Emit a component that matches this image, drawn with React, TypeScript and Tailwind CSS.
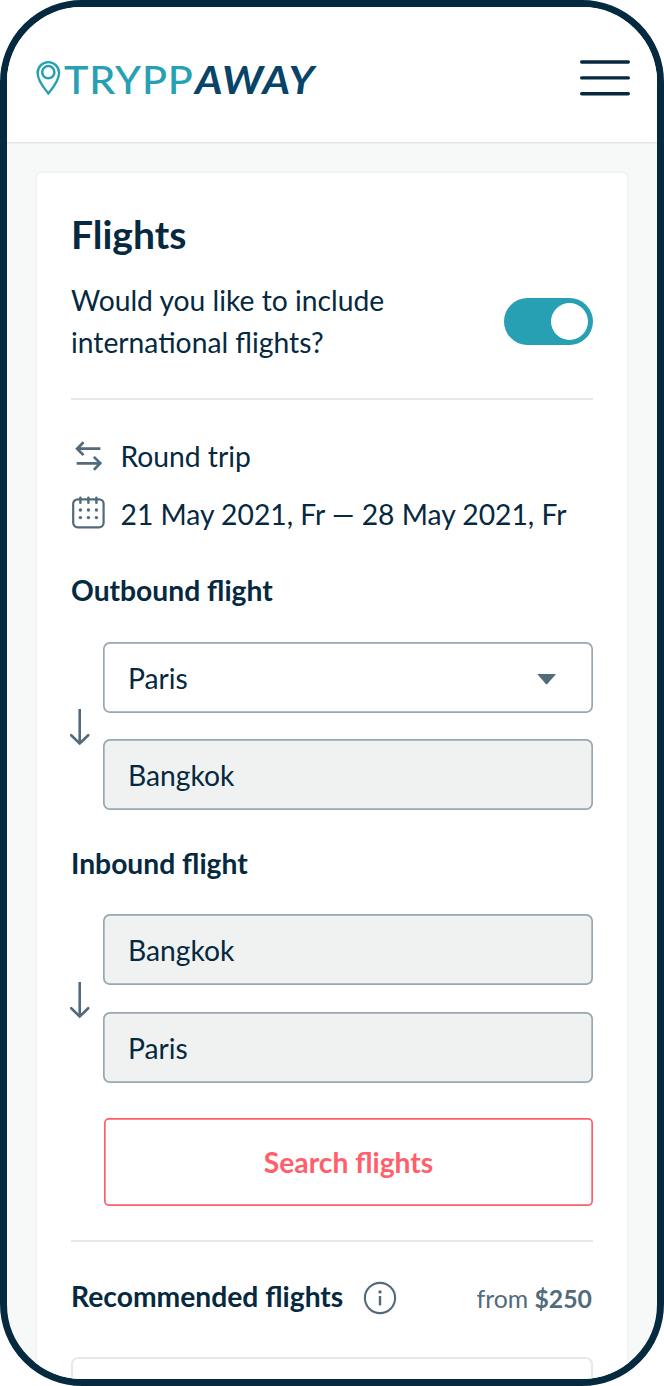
import React from "react";

function Logo() {
  return (
    <div className="flex items-center">
      <svg width="26" height="36" viewBox="0 0 26 36" fill="none" stroke="#26a0b2" className="shrink-0">
        <path
          d="M12.3 33.4C8.6 28.6 1.6 20.8 1.6 12.9a10.75 10.75 0 0 1 21.5 0C23.1 20.8 16.1 28.6 12.3 33.4Z"
          strokeWidth="2.4"
        />
        <circle cx="12.3" cy="12.2" r="6.1" strokeWidth="2.5" />
      </svg>
      <div className="mt-0.5 ml-0.5 flex text-[39px] leading-[48px] whitespace-nowrap">
        <span className="w-[131px] origin-left scale-x-[1.06] font-medium tracking-[0.8px] text-[#26a0b2]">TRYPP</span>
        <span className="origin-left scale-x-[1.09] font-bold tracking-[1.2px] text-[#084368] italic">AWAY</span>
      </div>
    </div>
  );
}

function MenuButton() {
  return (
    <button aria-label="Menu" className="flex h-9 w-[50px] flex-col justify-between">
      <svg width="50" height="36" viewBox="0 0 50 36" stroke="#05293f" strokeWidth="3.4" strokeLinecap="round">
        <path d="M1.7 2H48.3M1.7 17.9H48.3M1.7 33.7H48.3" />
      </svg>
    </button>
  );
}

function RoundTripIcon() {
  return (
    <svg width="34" height="34" viewBox="0 0 34 34" fill="none" stroke="#526b7c" strokeWidth="2.7">
      <path d="M29.4 9.7H6.2M12.5 3.3 6.1 9.7l6.4 6.4M5.7 24.3H29M22.9 17.9l6.4 6.4-6.4 6.4" />
    </svg>
  );
}

function CalendarIcon() {
  return (
    <svg width="34" height="34" viewBox="0 0 34 34" fill="none" stroke="#526b7c" strokeWidth="2.2" className="-translate-y-0.5">
      <rect x="2.2" y="4.3" width="30.4" height="28" rx="4.5" />
      <g strokeWidth="2.5" strokeLinecap="round">
        <path d="M9.4 2.8v5M17.4 2.8v5M25.4 2.8v5" />
      </g>
      <g fill="#526b7c" stroke="none">
        <circle cx="9.4" cy="15" r="1.7" />
        <circle cx="17.4" cy="15" r="1.7" />
        <circle cx="25.4" cy="15" r="1.7" />
        <circle cx="9.4" cy="22.6" r="1.7" />
        <circle cx="17.4" cy="22.6" r="1.7" />
        <circle cx="25.4" cy="22.6" r="1.7" />
      </g>
    </svg>
  );
}

function DownArrow() {
  return (
    <svg width="20" height="38" viewBox="0 0 20 38" fill="none" stroke="#526b7c" strokeWidth="2.6" className="-ml-px">
      <path d="M9.7 1V36" />
      <path d="M1.2 27.2 9.7 35.5l8.5-8.3" strokeLinecap="round" />
    </svg>
  );
}

function InfoIcon() {
  return (
    <svg width="34" height="34" viewBox="0 0 34 34" fill="none" stroke="#526b7c" strokeWidth="2.1">
      <circle cx="17" cy="17" r="15.1" />
      <path d="M17 15v9.4" strokeWidth="2.4" />
      <circle cx="17" cy="10.9" r="1.7" fill="#526b7c" stroke="none" />
    </svg>
  );
}

function Field({ city, select = false }: { city: string; select?: boolean }) {
  return (
    <div
      className={
        "flex h-[71px] items-center justify-between rounded-[7px] pr-9 pl-[25px] ring-[1.7px] ring-[#98a8b3] ring-inset " +
        (select ? "bg-white" : "bg-[#f0f2f1]")
      }
    >
      <span>{city}</span>
      {select && (
        <svg width="20" height="11" viewBox="0 0 20 11" fill="#526b7c" className="mt-[3px]">
          <path d="M.2 0H19L10.6 9.8q-1 1-2 0Z" />
        </svg>
      )}
    </div>
  );
}

function Leg({ from, to, select }: { from: string; to: string; select?: boolean }) {
  return (
    <div className="flex items-center">
      <div className="flex w-8 shrink-0 items-center pt-0.5">
        <DownArrow />
      </div>
      <div className={"flex grow flex-col " + (select ? "gap-[26px]" : "gap-[27px]")}>
        <Field city={from} select={select} />
        <Field city={to} />
      </div>
    </div>
  );
}

export default function App() {
  return (
    <div className="flex h-[1386px] w-[664px] flex-col overflow-hidden rounded-[82px] border-[7px] border-[#05293f] bg-[#f7f9f8] font-[Lato,sans-serif] text-[28.25px] leading-[42px] text-[#05293f]">
      <header className="flex h-[136px] shrink-0 items-center justify-between border-b border-[#dfe5e9] bg-white pt-1.5 pr-[27px] pl-[29px] shadow-[0_1px_0_#eef1f2]">
        <Logo />
        <MenuButton />
      </header>
      <main className="mx-7 mt-7 flex grow flex-col rounded-t-[7px] border-2 border-b-0 border-[#f2f4f4] bg-white px-[34px]">
        <h1 className="mt-[33px] text-[39px] leading-[56px] font-bold">Flights</h1>
        <div className="mt-[17px] flex h-[84px] items-center justify-between">
          <p className="w-[340px]">Would you like to include international flights?</p>
          <button
            role="switch"
            aria-checked="true"
            aria-label="Include international flights"
            className="flex h-[47px] w-[89px] items-center justify-end rounded-full bg-[#26a0b2] pr-[5px]"
          >
            <span className="size-[37px] rounded-full bg-white" />
          </button>
        </div>
        <div className="mt-[35px] h-0.5 shrink-0 bg-[#e3e8eb]" />
        <div className="mt-[35px] flex h-[42px] items-center gap-[15.5px]">
          <RoundTripIcon />
          <span>Round trip</span>
        </div>
        <div className="mt-4 flex h-[42px] items-center gap-[15.5px]">
          <CalendarIcon />
          <span className="whitespace-nowrap">21 May 2021, Fr — 28 May 2021, Fr</span>
        </div>
        <h2 className="mt-[34px] mb-[31px] font-bold">Outbound flight</h2>
        <Leg from="Paris" to="Bangkok" select />
        <h2 className="mt-8 mb-[30px] font-bold">Inbound flight</h2>
        <Leg from="Bangkok" to="Paris" />
        <button className="mt-[35px] ml-[33px] flex h-[88px] shrink-0 items-center justify-center rounded-[5px] font-bold text-[#ff5f6b] ring-[1.7px] ring-[#ff5f6b] ring-inset">
          Search flights
        </button>
        <div className="mt-[34px] h-0.5 shrink-0 bg-[#e3e8eb]" />
        <div className="mt-[34px] flex h-[42px] shrink-0 items-center">
          <h2 className="-mt-0.5 font-bold">Recommended flights</h2>
          <span className="mt-px ml-5">
            <InfoIcon />
          </span>
          <span className="mt-1 mr-px ml-auto text-[24.8px] text-[#526b7c]">
            from <b>$250</b>
          </span>
        </div>
        <div className="mt-[39px] grow rounded-t-[7px] border-2 border-b-0 border-[#e5e9eb]" />
      </main>
    </div>
  );
}
